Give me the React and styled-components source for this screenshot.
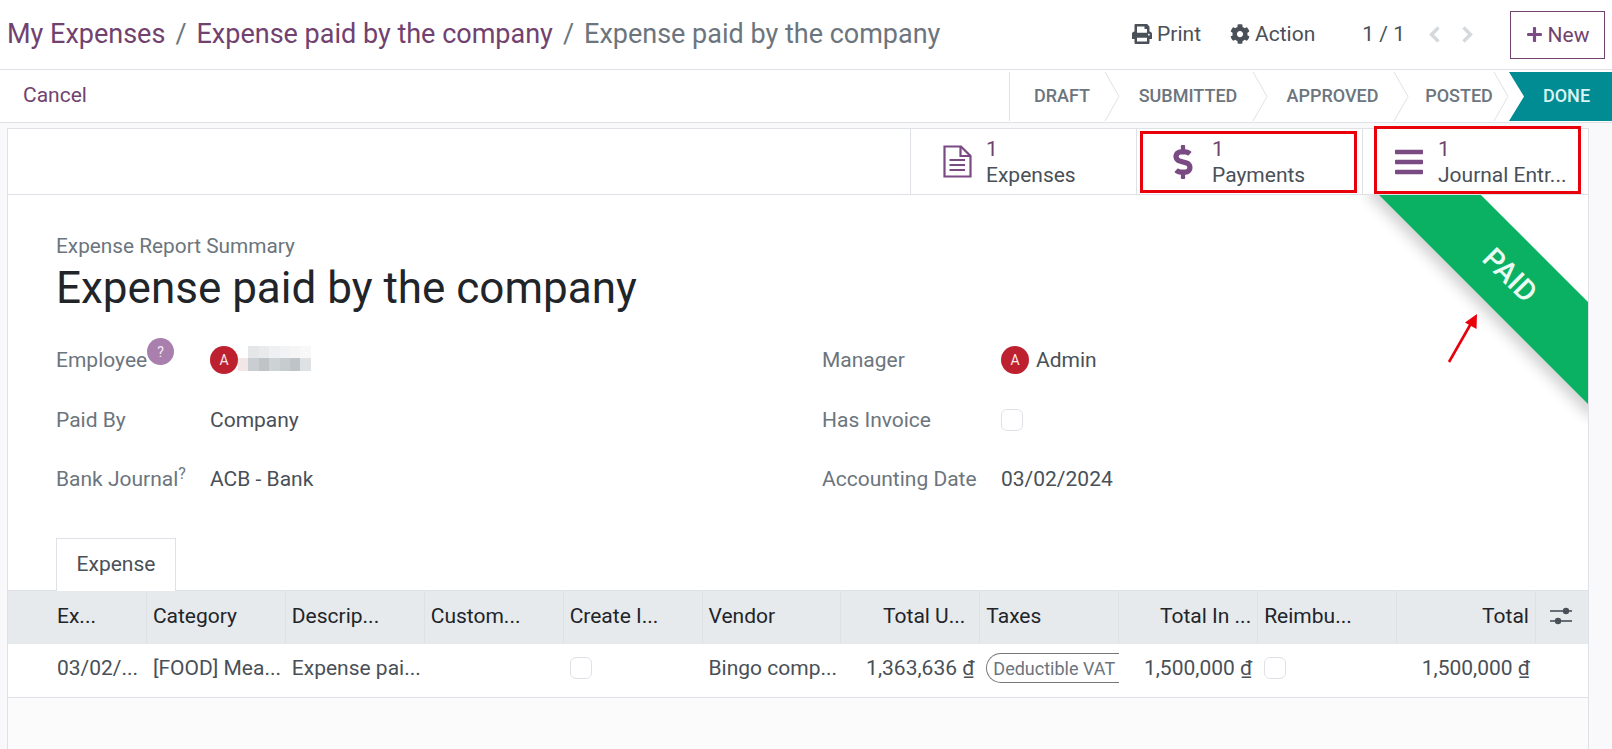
import React from 'react';
import styled, { createGlobalStyle } from 'styled-components';
import { FaPrint, FaCog, FaPlus, FaDollarSign, FaBars } from 'react-icons/fa';

const purple = '#71426f';
const iconPurple = '#7a4a82';

const GlobalStyle = createGlobalStyle`
  html, body {
    margin: 0;
    height: 100%;
    background: #f9f9fb;
    overflow: hidden;
  }
  body {
    font-family: Roboto, "Liberation Sans", sans-serif;
    font-size: 21px;
    color: #495057;
  }
`;

const Page = styled.div`
  width: 1612px;
  height: 749px;
  position: relative;
  overflow: hidden;
`;
const TopBar = styled.div`
  height: 69px;
  background: #fff;
  border-bottom: 1px solid #dee2e6;
  display: flex;
  align-items: center;
  padding: 0 7px 0 7px;
`;
const Breadcrumb = styled.div`
  flex: 1;
  display: flex;
  gap: 10px;
  font-size: 27px;
  color: ${purple};
  margin-top: -1px;
`;
const CrumbSep = styled.span`
  color: #6c757d;
`;
const CrumbLast = styled.span`
  color: #6c757d;
`;
const TopAction = styled.div`
  display: flex;
  align-items: center;
  gap: 5px;
  margin-right: ${(p) => p.$mr}px;
  margin-top: -1px;
  svg {
    font-size: 20px;
  }
`;
const Pager = styled.div`
  display: flex;
  align-items: center;
  gap: 20px;
  margin-top: -1px;
  margin-right: 36px;
  span {
    margin-right: 3px;
  }
`;
const PagerArrow = styled.svg`
  display: block;
  width: 13px;
  height: 17px;
`;
const NewButton = styled.div`
  width: 95px;
  height: 48px;
  box-sizing: border-box;
  border: 1px solid ${purple};
  display: flex;
  align-items: center;
  justify-content: center;
  gap: 5px;
  color: ${purple};
  svg {
    color: ${iconPurple};
    font-size: 17px;
  }
`;
const StatusRow = styled.div`
  height: 51px;
  padding-top: 1px;
  background: #fff;
  border-bottom: 1px solid #dee2e6;
  display: flex;
  align-items: stretch;
  justify-content: space-between;
`;
const CancelLink = styled.div`
  padding: 0 0 3px 23px;
  display: flex;
  align-items: center;
  color: ${purple};
`;
const Steps = styled.div`
  display: flex;
  height: 49px;
  margin-top: 1px;
  border-left: 1px solid #dee2e6;
  margin-left: auto;
`;
const Step = styled.div`
  position: relative;
  box-sizing: border-box;
  width: ${(p) => p.$w}px;
  padding: 0 ${(p) => p.$pr}px 3px 0;
  display: flex;
  align-items: center;
  justify-content: center;
  font-size: 18px;
  font-weight: 500;
  color: #6c757d;
`;
const StepChevron = styled.svg`
  position: absolute;
  right: 0;
  top: 0;
  width: 16px;
  height: 49px;
`;
const DoneStep = styled.div`
  width: 103px;
  background: #018b92;
  color: #d8f4f4;
  font-size: 18px;
  font-weight: 500;
  display: flex;
  align-items: center;
  justify-content: center;
  padding: 0 0 3px 12px;
  box-sizing: border-box;
  clip-path: polygon(0 0, 100% 0, 100% 100%, 0 100%, 15px 50%);
`;
const Sheet = styled.div`
  position: absolute;
  left: 7px;
  top: 128px;
  width: 1582px;
  height: 640px;
  box-sizing: border-box;
  background: #fff;
  border-left: 1px solid #dee2e6;
  border-right: 1px solid #dee2e6;
  border-top: 1px solid #dee2e6;
`;
const ButtonBox = styled.div`
  height: 65px;
  border-bottom: 1px solid #dee2e6;
  display: flex;
  justify-content: flex-end;
`;
const StatButton = styled.div`
  position: relative;
  width: 226px;
  box-sizing: border-box;
  border-left: 1px solid #dee2e6;
  display: flex;
  align-items: center;
  padding-left: 30px;
  gap: 13px;
`;
const StatIcon = styled.div`
  color: ${iconPurple};
  font-size: ${(p) => p.$size}px;
  width: 32px;
  display: flex;
  justify-content: center;
  line-height: 0;
`;
const StatText = styled.div`
  line-height: 26px;
  white-space: nowrap;
`;
const StatValue = styled.div`
  color: ${purple};
`;
const Highlight = styled.div`
  position: absolute;
  left: ${(p) => p.$l}px;
  top: ${(p) => p.$t}px;
  width: ${(p) => p.$w}px;
  height: ${(p) => p.$h}px;
  box-sizing: border-box;
  border: 3px solid #e8000b;
`;
const Ribbon = styled.div`
  position: absolute;
  right: 0;
  top: 66px;
  width: 230px;
  height: 230px;
  overflow: hidden;
  pointer-events: none;
`;
const RibbonBand = styled.div`
  position: absolute;
  left: -8px;
  top: 44px;
  width: 320px;
  height: 72px;
  background: #0ab163;
  color: #e9fbf3;
  transform: rotate(45deg);
  box-shadow: 0 8px 14px rgba(0, 0, 0, 0.18);
  display: flex;
  align-items: center;
  justify-content: center;
  font-size: 29px;
  font-weight: 500;
  text-transform: uppercase;
`;
const RedArrow = styled.svg`
  position: absolute;
  left: 1435px;
  top: 180px;
  width: 40px;
  height: 60px;
`;
const FormBody = styled.div`
  padding: 39px 0 0 48px;
`;
const SmallTitle = styled.div`
  color: #6c757d;
  font-size: 20.8px;
  line-height: 24px;
`;
const Title = styled.div`
  color: #212529;
  font-size: 44px;
  line-height: 60px;
`;
const FieldGrid = styled.div`
  margin-top: 27px;
  display: grid;
  grid-template-columns: 766px 1fr;
`;
const FieldColumn = styled.div`
  display: flex;
  flex-direction: column;
  gap: 29.5px;
`;
const Field = styled.div`
  display: flex;
  align-items: center;
  height: 30px;
`;
const Label = styled.div`
  width: ${(p) => p.$w}px;
  color: #6c757d;
  display: flex;
`;
const HelpBadge = styled.span`
  width: 27px;
  height: 27px;
  border-radius: 50%;
  background: #a97fad;
  color: #f4eaf4;
  font-size: 14px;
  display: flex;
  align-items: center;
  justify-content: center;
  margin-top: -10px;
`;
const HelpMark = styled.sup`
  font-size: 16px;
  line-height: 14px;
`;
const Avatar = styled.span`
  width: 28px;
  height: 28px;
  border-radius: 50%;
  background: #bd2130;
  color: #fbe9ea;
  font-size: 14px;
  display: flex;
  align-items: center;
  justify-content: center;
  margin-right: 7px;
`;
const Blurred = styled.div`
  display: grid;
  grid-template-columns: repeat(7, 10.4px);
  grid-auto-rows: 12.5px;
  margin: -4px 0 0 -7px;
`;
const Check = styled.span`
  width: 22px;
  height: 22px;
  box-sizing: border-box;
  border: 1px solid #dee2e6;
  border-radius: 6px;
  background: #fff;
  display: block;
`;
const TabBar = styled.div`
  margin-top: 43px;
  padding-left: 48px;
  display: flex;
`;
const Tab = styled.div`
  width: 120px;
  height: 53px;
  box-sizing: border-box;
  border: 1px solid #dee2e6;
  border-bottom: 0;
  padding-bottom: 2px;
  display: flex;
  align-items: center;
  justify-content: center;
  position: relative;
  top: 1px;
  background: #fff;
`;
const TableHead = styled.div`
  display: grid;
  grid-template-columns: repeat(11, 1fr) 52px;
  height: 53px;
  background: #e7eaed;
  border-top: 1px solid #dee2e6;
  color: #212529;
`;
const TableRow = styled.div`
  display: grid;
  grid-template-columns: repeat(11, 1fr) 52px;
  height: 53px;
  background: #fff;
  border-bottom: 1px solid #dee2e6;
`;
const Cell = styled.div`
  min-width: 0;
  display: flex;
  align-items: center;
  justify-content: ${(p) => (p.$right ? 'flex-end' : 'flex-start')};
  padding: 0 ${(p) => p.$pr || 6}px ${(p) => (p.$head ? 3 : 5)}px ${(p) => (p.$first ? 49 : 6)}px;
  box-sizing: border-box;
  overflow: hidden;
  border-right: ${(p) => (p.$head ? '1px solid #dee2e6' : '0')};
`;
const TogglerCell = styled.div`
  display: flex;
  align-items: center;
  padding: 0 0 3px 14px;
`;
const CellText = styled.span`
  white-space: nowrap;
`;
const TaxTag = styled.span`
  flex: none;
  height: 30px;
  box-sizing: border-box;
  border: 1.5px solid #777;
  border-right: 0;
  border-radius: 15px 0 0 15px;
  padding: 0 30px 0 6px;
  font-size: 18px;
  color: #6c757d;
  display: flex;
  align-items: center;
  white-space: nowrap;
`;
const Empty = styled.div`
  height: 52px;
  background: #fbfbfb;
  border-bottom: 1px solid #dee2e6;
`;

const blurColors = [
  '#ffffff', '#e4e6e8', '#e8eaeb', '#eff0f1', '#f2f3f4', '#f5f5f6', '#f8f8f9',
  '#f3e6e7', '#c9ced2', '#bfc3c6', '#cdd2d5', '#c7cccf', '#bfc4c8', '#dfe2e4',
];
const headers = [
  { text: 'Ex...', first: true },
  { text: 'Category' },
  { text: 'Descrip...' },
  { text: 'Custom...' },
  { text: 'Create I...' },
  { text: 'Vendor' },
  { text: 'Total U...', right: true, pr: 14 },
  { text: 'Taxes' },
  { text: 'Total In ...', right: true },
  { text: 'Reimbu...' },
  { text: 'Total', right: true },
];

function Sliders() {
  return (
    <svg width="22" height="20" viewBox="0 0 22 20" fill="#495057">
      <rect x="0" y="4.2" width="22" height="1.6" />
      <rect x="0" y="14.2" width="22" height="1.6" />
      <circle cx="16" cy="5" r="3.2" />
      <circle cx="8" cy="15" r="3.2" />
    </svg>
  );
}

function DocIcon() {
  return (
    <svg width="29" height="33" viewBox="0 0 29 33" fill="none" stroke="currentColor" strokeWidth="2.2">
      <path d="M1.5 1.5 H18 L27.5 11 V31.5 H1.5 Z" />
      <path d="M17.5 1.5 V11 H27.5" />
      <path d="M6.5 15 H22 M6.5 20 H22 M6.5 25 H22" strokeWidth="2" />
    </svg>
  );
}

function Arrow({ d }) {
  return (
    <PagerArrow viewBox="0 0 13 17" fill="none" stroke="#d5d9dd" strokeWidth="3.4">
      <path d={d} />
    </PagerArrow>
  );
}

function StatusStep({ w, pr, children }) {
  return (
    <Step $w={w} $pr={pr}>
      {children}
      <StepChevron viewBox="0 0 16 49" fill="none" stroke="#dee2e6">
        <path d="M1 0 L15 24.5 L1 49" />
      </StepChevron>
    </Step>
  );
}

export default function App() {
  return (
    <Page>
      <GlobalStyle />
      <TopBar>
        <Breadcrumb>
          <span>My Expenses</span>
          <CrumbSep>/</CrumbSep>
          <span>Expense paid by the company</span>
          <CrumbSep>/</CrumbSep>
          <CrumbLast>Expense paid by the company</CrumbLast>
        </Breadcrumb>
        <TopAction $mr={29}>
          <FaPrint />
          Print
        </TopAction>
        <TopAction $mr={47}>
          <FaCog />
          Action
        </TopAction>
        <Pager>
          <span>1 / 1</span>
          <Arrow d="M10.5 1.5 L3.5 8.5 L10.5 15.5" />
          <Arrow d="M2.5 1.5 L9.5 8.5 L2.5 15.5" />
        </Pager>
        <NewButton>
          <FaPlus />
          New
        </NewButton>
      </TopBar>
      <StatusRow>
        <CancelLink>Cancel</CancelLink>
        <Steps>
          <StatusStep w={110} pr={6}>DRAFT</StatusStep>
          <StatusStep w={148} pr={12}>SUBMITTED</StatusStep>
          <StatusStep w={141} pr={12}>APPROVED</StatusStep>
          <StatusStep w={100} pr={0}>POSTED</StatusStep>
          <DoneStep>DONE</DoneStep>
        </Steps>
      </StatusRow>
      <Sheet>
        <ButtonBox>
          <StatButton>
            <StatIcon $size={32}>
              <DocIcon />
            </StatIcon>
            <StatText>
              <StatValue>1</StatValue>
              Expenses
            </StatText>
          </StatButton>
          <StatButton>
            <StatIcon $size={34}>
              <FaDollarSign />
            </StatIcon>
            <StatText>
              <StatValue>1</StatValue>
              Payments
            </StatText>
            <Highlight $l={3} $t={2} $w={217} $h={62} />
          </StatButton>
          <StatButton>
            <StatIcon $size={32}>
              <FaBars />
            </StatIcon>
            <StatText>
              <StatValue>1</StatValue>
              Journal Entr...
            </StatText>
            <Highlight $l={11} $t={-3} $w={207} $h={68} />
          </StatButton>
        </ButtonBox>
        <Ribbon>
          <RibbonBand>Paid</RibbonBand>
        </Ribbon>
        <RedArrow viewBox="0 0 40 60" fill="none">
          <path d="M6 53 L30 11" stroke="#e8000b" strokeWidth="2.6" />
          <path d="M34 5 L33.5 20 L22 13.5 Z" fill="#e8000b" />
        </RedArrow>
        <FormBody>
          <SmallTitle>Expense Report Summary</SmallTitle>
          <Title>Expense paid by the company</Title>
          <FieldGrid>
            <FieldColumn>
              <Field>
                <Label $w={154}>
                  Employee
                  <HelpBadge>?</HelpBadge>
                </Label>
                <Avatar>A</Avatar>
                <Blurred>
                  {blurColors.map((c, i) => (
                    <div key={i} style={{ background: c }} />
                  ))}
                </Blurred>
              </Field>
              <Field>
                <Label $w={154}>Paid By</Label>
                Company
              </Field>
              <Field>
                <Label $w={154}>
                  Bank Journal
                  <HelpMark>?</HelpMark>
                </Label>
                ACB - Bank
              </Field>
            </FieldColumn>
            <FieldColumn>
              <Field>
                <Label $w={179}>Manager</Label>
                <Avatar>A</Avatar>
                Admin
              </Field>
              <Field>
                <Label $w={179}>Has Invoice</Label>
                <Check />
              </Field>
              <Field>
                <Label $w={179}>Accounting Date</Label>
                03/02/2024
              </Field>
            </FieldColumn>
          </FieldGrid>
        </FormBody>
        <TabBar>
          <Tab>Expense</Tab>
        </TabBar>
        <TableHead>
          {headers.map((h) => (
            <Cell key={h.text} $head $first={h.first} $right={h.right} $pr={h.pr}>
              <CellText>{h.text}</CellText>
            </Cell>
          ))}
          <TogglerCell>
            <Sliders />
          </TogglerCell>
        </TableHead>
        <TableRow>
          <Cell $first><CellText>03/02/...</CellText></Cell>
          <Cell><CellText>[FOOD] Mea...</CellText></Cell>
          <Cell><CellText>Expense pai...</CellText></Cell>
          <Cell />
          <Cell><Check /></Cell>
          <Cell><CellText>Bingo comp...</CellText></Cell>
          <Cell $right><CellText>1,363,636 ₫</CellText></Cell>
          <Cell><TaxTag>Deductible VAT</TaxTag></Cell>
          <Cell $right><CellText>1,500,000 ₫</CellText></Cell>
          <Cell><Check /></Cell>
          <Cell $right><CellText>1,500,000 ₫</CellText></Cell>
          <Cell />
        </TableRow>
        <Empty />
      </Sheet>
    </Page>
  );
}
